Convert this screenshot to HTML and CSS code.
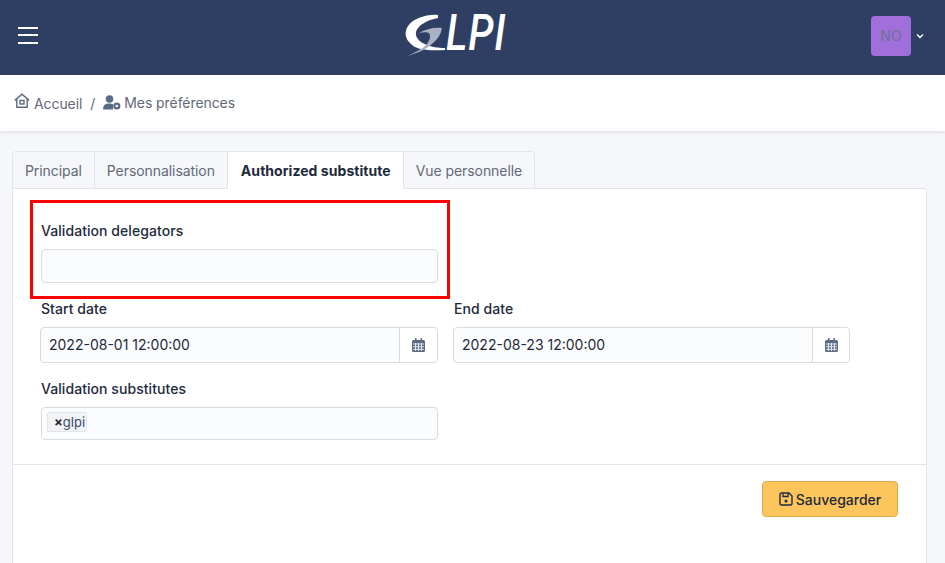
FILE: index.html
```html
<!DOCTYPE html>
<html lang="fr">

<head>
    <meta charset="UTF-8">
    <meta name="viewport" content="width=device-width, initial-scale=1.0">
    <title>GLPI - Mes préférences</title>
    <link rel="stylesheet" href="styles.css">
</head>

<body>
    <header class="topbar">
        <button class="burger"><span></span><span></span><span></span></button>
        <div class="logo">
            <svg class="logo-g" width="42" height="46" viewBox="0 0 42 46">
                <path fill="#fff" d="M33 3 C22 2 9 6 3 14 C-1 20 0 27 6 32 C11 37 19 39 40 38 L40 36 C33 36 26 35 22 33 C14 30 10 25 11 20 C13 13 22 8 33 6 Z"/>
                <path fill="#aab1c2" d="M14 21 C21 17 29 15 37 16 C36 22 33 27 28 31 C22 37 12 41 3 44 C10 40 18 37 22 32 C25 28 26 24 24 21 C22 20 18 20 14 21 Z"/>
            </svg>
            <span class="logo-text">LPI</span>
        </div>
        <div class="user">
            <div class="avatar">NO</div>
            <svg width="10" height="6" viewBox="0 0 10 6"><path d="M2 1.5 L5 4.5 L8 1.5" fill="none" stroke="#fff" stroke-width="1.4"/></svg>
        </div>
    </header>

    <nav class="crumbs">
        <svg class="icon-home" width="16" height="16" viewBox="0 0 16 16">
            <path d="M0.8 7.4 L8 1.2 L15.2 7.4 M2.8 6 V14.3 H13.2 V6" fill="none" stroke="#5b6b85" stroke-width="1.4"/>
            <rect x="6" y="7.5" width="4" height="3.5" fill="none" stroke="#5b6b85" stroke-width="1.4"/>
        </svg>
        <span class="crumb-home">Accueil</span>
        <span class="crumb-sep">/</span>
        <svg class="icon-user" width="18" height="15" viewBox="0 0 18 15">
            <circle cx="6.5" cy="4" r="3.8" fill="#5b6b85"/>
            <path d="M0 14.5 C0 10 2.5 8.5 6.5 8.5 C8 8.5 9 8.7 10 9.2 L10 14.5 Z" fill="#5b6b85"/>
            <circle cx="13.8" cy="11" r="3.6" fill="#5b6b85"/>
            <circle cx="13.8" cy="11" r="1.3" fill="#fff"/>
        </svg>
        <span>Mes préférences</span>
    </nav>

    <main class="content">
        <ul class="tabs">
            <li>Principal</li>
            <li>Personnalisation</li>
            <li class="active">Authorized substitute</li>
            <li>Vue personnelle</li>
        </ul>
        <section class="panel">
            <div class="highlight"></div>
            <form class="fields">
                <div class="field first">
                    <label>Validation delegators</label>
                    <div class="box"></div>
                </div>
                <div class="field first"></div>
                <div class="field">
                    <label>Start date</label>
                    <div class="date-group">
                        <div class="date-value">2022-08-01 12:00:00</div>
                        <div class="date-btn">
                            <svg width="13" height="14" viewBox="0 0 13 14"><use href="#cal"/></svg>
                        </div>
                    </div>
                </div>
                <div class="field">
                    <label>End date</label>
                    <div class="date-group">
                        <div class="date-value">2022-08-23 12:00:00</div>
                        <div class="date-btn narrow">
                            <svg width="13" height="14" viewBox="0 0 13 14"><use href="#cal"/></svg>
                        </div>
                    </div>
                </div>
                <div class="field">
                    <label>Validation substitutes</label>
                    <div class="box tags"><span class="tag"><b>×</b>glpi</span></div>
                </div>
            </form>
            <div class="actions">
                <button class="save" type="button">
                    <svg width="14" height="14" viewBox="0 0 14 14">
                        <path d="M2.5 1 H10 L13 4 V11.5 Q13 13 11.5 13 H2.5 Q1 13 1 11.5 V2.5 Q1 1 2.5 1 Z" fill="none" stroke="#1f2a44" stroke-width="1.4"/>
                        <path d="M4 1.5 V4.5 H9 V1.5" fill="none" stroke="#1f2a44" stroke-width="1.3"/>
                        <circle cx="7" cy="9" r="1.5" fill="#1f2a44"/>
                    </svg>
                    Sauvegarder
                </button>
            </div>
        </section>
    </main>

    <svg class="defs" width="0" height="0">
        <symbol id="cal" viewBox="0 0 13 14">
            <path fill="#5b6b85" d="M3 0 H4.5 V2 H8.5 V0 H10 V2 H11.5 Q13 2 13 3.5 V12.5 Q13 14 11.5 14 H1.5 Q0 14 0 12.5 V3.5 Q0 2 1.5 2 H3 Z"/>
            <path stroke="#fff" stroke-width="0.8" d="M1 6 H12 M1 8.7 H12 M1 11.3 H12 M3.6 5 V13 M6.5 5 V13 M9.4 5 V13"/>
        </symbol>
    </svg>
</body>

</html>
```

FILE: styles.css
```css
* {
    box-sizing: border-box;
}

body {
    margin: 0;
    height: 563px;
    overflow: hidden;
    background: #f5f7fb;
    color: #1e293b;
    font-family: "Inter", "Liberation Sans", sans-serif;
    font-size: 14px;
}

/* top bar */
.topbar {
    height: 75px;
    background: #2f3f64;
    display: flex;
    align-items: center;
    justify-content: space-between;
    padding: 0 18px 3px;
    position: relative;
}

.burger {
    width: 20px;
    height: 17px;
    margin-bottom: 1px;
    padding: 0;
    border: none;
    background: none;
    display: flex;
    flex-direction: column;
}

.burger span {
    display: block;
    flex: none;
    height: 2px;
    margin-bottom: 5px;
    background: #fff;
}

.burger span:nth-child(2) {
    margin-bottom: 6px;
}

.burger span:last-child {
    margin-bottom: 0;
}

.logo {
    position: absolute;
    left: 405px;
    top: 12px;
    display: flex;
    align-items: flex-start;
}

.logo-g {
    display: block;
    overflow: visible;
}

.logo-text {
    margin-left: -1px;
    color: #fff;
    font-family: "Roboto", "Liberation Sans", sans-serif;
    font-style: italic;
    font-weight: 500;
    font-size: 49px;
    line-height: 44px;
    letter-spacing: 1px;
    transform: scaleX(0.83);
    transform-origin: left center;
}

.user {
    display: flex;
    align-items: center;
    gap: 4px;
    margin-right: 2px;
}

.avatar {
    width: 40px;
    height: 40px;
    padding-bottom: 2px;
    border-radius: 4px;
    background: #a06fdb;
    color: #6d7194;
    font-weight: 400;
    display: flex;
    align-items: center;
    justify-content: center;
}

/* breadcrumb */
.crumbs {
    height: 56px;
    background: #fff;
    box-shadow: 0 1px 4px rgba(30, 41, 59, 0.12);
    display: flex;
    align-items: center;
    padding: 0 0 2px 14px;
    color: #626976;
    position: relative;
    letter-spacing: -0.08px;
}

.icon-home {
    margin-right: 4px;
    margin-top: -2px;
}

.crumb-home {
    margin-top: 2px;
}

.crumb-sep {
    margin: 2px 8px 0;
}

.icon-user {
    margin-right: 3px;
    margin-top: 1px;
}

/* tabs */
.content {
    padding: 20px 18px 0 12px;
}

.tabs {
    list-style: none;
    margin: 0;
    padding: 0;
    display: flex;
    position: relative;
    z-index: 1;
}

.tabs li {
    height: 38px;
    padding: 0 12px;
    display: flex;
    align-items: center;
    color: #626976;
    background: #f5f7fb;
    border: 1px solid #e1e4ea;
    border-left: none;
    letter-spacing: -0.07px;
}

.tabs li:first-child {
    border-left: 1px solid #e1e4ea;
    border-top-left-radius: 4px;
}

.tabs li:last-child {
    border-top-right-radius: 4px;
}

.tabs .active {
    padding-left: 13px;
    background: #fff;
    color: #1e293b;
    font-weight: 700;
    border-bottom-color: #fff;
    letter-spacing: 0.05px;
}

.panel {
    position: relative;
    height: 380px;
    margin-top: -1px;
    background: #fff;
    border: 1px solid #e1e4ea;
    border-radius: 0 4px 0 0;
}

/* red annotation drawn over the form */
.highlight {
    position: absolute;
    left: 17px;
    top: 11px;
    width: 420px;
    height: 99px;
    border: 3px solid #f00;
    pointer-events: none;
}

.fields {
    display: grid;
    grid-template-columns: 398px 397px;
    column-gap: 15px;
    padding: 31px 0 0 27px;
    height: 275px;
    align-content: start;
}

.field {
    height: 80px;
}

.field.first {
    height: 78px;
}

.field label {
    display: block;
    height: 21px;
    line-height: 21px;
    margin-bottom: 8px;
    margin-left: 1px;
    font-weight: 500;
    letter-spacing: 0.06px;
}

.box {
    margin-left: 1px;
    height: 34px;
    background: #fbfcfd;
    border: 1px solid #d9dbe0;
    border-radius: 4px;
}

.date-group {
    display: flex;
    height: 36px;
    border: 1px solid #d9dbe0;
    border-radius: 4px;
    background: #fbfcfd;
}

.date-value {
    flex: 1;
    display: flex;
    align-items: center;
    padding: 0 0 1px 8px;
}

.date-btn {
    width: 38px;
    display: flex;
    align-items: center;
    justify-content: center;
    border-left: 1px solid #d9dbe0;
    background: #fff;
    border-radius: 0 4px 4px 0;
}

.date-btn.narrow {
    width: 37px;
}

.tags {
    height: 33px;
    padding: 4px 5px;
}

.tag {
    display: inline-block;
    height: 20px;
    line-height: 19px;
    padding: 0 0 0 6px;
    width: 40px;
    font-size: 13px;
    background: #f1f3f7;
    border: 1px solid #e1e4ea;
    border-radius: 2px;
    color: #3b4863;
}

.tag b {
    color: #1e293b;
}

.actions {
    border-top: 1px solid #e1e4ea;
    display: flex;
    justify-content: flex-end;
    padding: 16px 28px 0 0;
}

.save {
    width: 136px;
    height: 36px;
    padding: 0;
    display: flex;
    align-items: center;
    justify-content: center;
    gap: 3px;
    font: 500 14px "Inter", "Liberation Sans", sans-serif;
    color: #1e293b;
    background: #fdc65c;
    border: 1px solid #dfa94a;
    border-radius: 4px;
}

.defs {
    position: absolute;
}
```
